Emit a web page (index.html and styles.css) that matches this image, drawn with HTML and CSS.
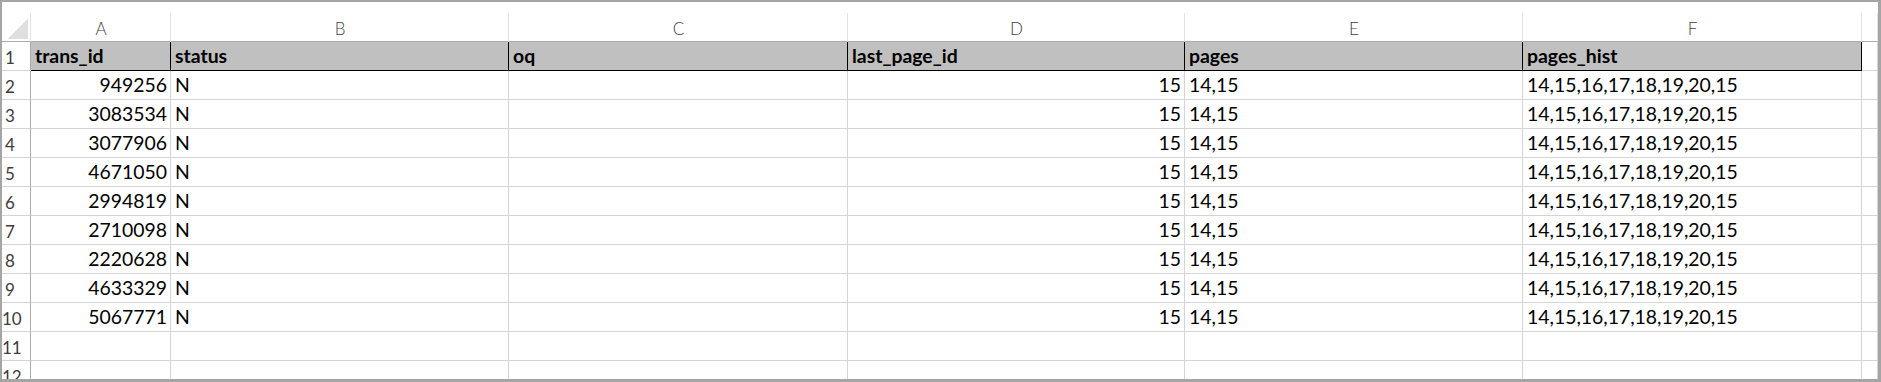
FILE: index.html
```html
<!DOCTYPE html>
<html lang="en">

<head>
    <meta charset="UTF-8">
    <title>trans_pages</title>
    <link rel="stylesheet" href="styles.css">
</head>

<body>
    <div class="window">
        <!-- column letters -->
        <div class="row col-heads">
            <div class="cell corner"></div>
            <div class="cell">A</div>
            <div class="cell">B</div>
            <div class="cell">C</div>
            <div class="cell">D</div>
            <div class="cell">E</div>
            <div class="cell">F</div>
            <div class="cell"></div>
        </div>
        <div class="row head">
            <div class="cell rh">1</div>
            <div class="cell hd">trans_id</div>
            <div class="cell hd">status</div>
            <div class="cell hd">oq</div>
            <div class="cell hd">last_page_id</div>
            <div class="cell hd">pages</div>
            <div class="cell hd">pages_hist</div>
            <div class="cell"></div>
        </div>
        <div class="row">
            <div class="cell rh">2</div>
            <div class="cell num">949256</div>
            <div class="cell">N</div>
            <div class="cell"></div>
            <div class="cell num">15</div>
            <div class="cell">14,15</div>
            <div class="cell">14,15,16,17,18,19,20,15</div>
            <div class="cell"></div>
        </div>
        <div class="row">
            <div class="cell rh">3</div>
            <div class="cell num">3083534</div>
            <div class="cell">N</div>
            <div class="cell"></div>
            <div class="cell num">15</div>
            <div class="cell">14,15</div>
            <div class="cell">14,15,16,17,18,19,20,15</div>
            <div class="cell"></div>
        </div>
        <div class="row">
            <div class="cell rh">4</div>
            <div class="cell num">3077906</div>
            <div class="cell">N</div>
            <div class="cell"></div>
            <div class="cell num">15</div>
            <div class="cell">14,15</div>
            <div class="cell">14,15,16,17,18,19,20,15</div>
            <div class="cell"></div>
        </div>
        <div class="row">
            <div class="cell rh">5</div>
            <div class="cell num">4671050</div>
            <div class="cell">N</div>
            <div class="cell"></div>
            <div class="cell num">15</div>
            <div class="cell">14,15</div>
            <div class="cell">14,15,16,17,18,19,20,15</div>
            <div class="cell"></div>
        </div>
        <div class="row">
            <div class="cell rh">6</div>
            <div class="cell num">2994819</div>
            <div class="cell">N</div>
            <div class="cell"></div>
            <div class="cell num">15</div>
            <div class="cell">14,15</div>
            <div class="cell">14,15,16,17,18,19,20,15</div>
            <div class="cell"></div>
        </div>
        <div class="row">
            <div class="cell rh">7</div>
            <div class="cell num">2710098</div>
            <div class="cell">N</div>
            <div class="cell"></div>
            <div class="cell num">15</div>
            <div class="cell">14,15</div>
            <div class="cell">14,15,16,17,18,19,20,15</div>
            <div class="cell"></div>
        </div>
        <div class="row">
            <div class="cell rh">8</div>
            <div class="cell num">2220628</div>
            <div class="cell">N</div>
            <div class="cell"></div>
            <div class="cell num">15</div>
            <div class="cell">14,15</div>
            <div class="cell">14,15,16,17,18,19,20,15</div>
            <div class="cell"></div>
        </div>
        <div class="row">
            <div class="cell rh">9</div>
            <div class="cell num">4633329</div>
            <div class="cell">N</div>
            <div class="cell"></div>
            <div class="cell num">15</div>
            <div class="cell">14,15</div>
            <div class="cell">14,15,16,17,18,19,20,15</div>
            <div class="cell"></div>
        </div>
        <div class="row">
            <div class="cell rh">10</div>
            <div class="cell num">5067771</div>
            <div class="cell">N</div>
            <div class="cell"></div>
            <div class="cell num">15</div>
            <div class="cell">14,15</div>
            <div class="cell">14,15,16,17,18,19,20,15</div>
            <div class="cell"></div>
        </div>
        <div class="row">
            <div class="cell rh">11</div>
            <div class="cell"></div>
            <div class="cell"></div>
            <div class="cell"></div>
            <div class="cell"></div>
            <div class="cell"></div>
            <div class="cell"></div>
            <div class="cell"></div>
        </div>
        <div class="row">
            <div class="cell rh">12</div>
            <div class="cell"></div>
            <div class="cell"></div>
            <div class="cell"></div>
            <div class="cell"></div>
            <div class="cell"></div>
            <div class="cell"></div>
            <div class="cell"></div>
        </div>
    </div>
</body>

</html>
```

FILE: styles.css
```css
* {
    padding: 0;
    margin: 0;
    box-sizing: border-box;
}

body {
    background: #fff;
    color: #000;
    font-family: Lato, "Open Sans", sans-serif;
}

.window {
    width: 1881px;
    height: 382px;
    border-style: solid;
    border-color: #a5a5a5;
    border-width: 2px 3px 3px 2px;
    padding-top: 11px;
    overflow: hidden;
}

.row {
    display: grid;
    grid-template-columns: 29px 140px 338px 339px 337px 338px 339px 1fr;
    height: 29px;
}

.cell {
    border-right: 1px solid #d4d4d4;
    border-bottom: 1px solid #d4d4d4;
    padding: 0 3px 0 4px;
    font-size: 19.4px;
    line-height: 28px;
    white-space: nowrap;
    overflow: hidden;
}

.num {
    text-align: right;
}

/* letters A..F */
.col-heads .cell {
    border-right-color: #e1e1e1;
    border-bottom-color: #ababab;
    padding-top: 2px;
    text-align: center;
    font-size: 17px;
    font-weight: 300;
    color: #3c3c3c;
}

.corner {
    background: linear-gradient(to bottom right, transparent 50%, #dfdfdf 50%) no-repeat;
    background-size: 21px 20px;
    background-position: right 2px bottom 2px;
}

/* row numbers */
.rh {
    border-right-color: #ababab;
    padding: 2px 12px 0 0;
    text-align: center;
    font-size: 17px;
    color: #3c3c3c;
}

.hd {
    background: #c0c0c0;
    font-weight: 700;
    border-right-color: #000;
    border-bottom-color: #000;
}
```
